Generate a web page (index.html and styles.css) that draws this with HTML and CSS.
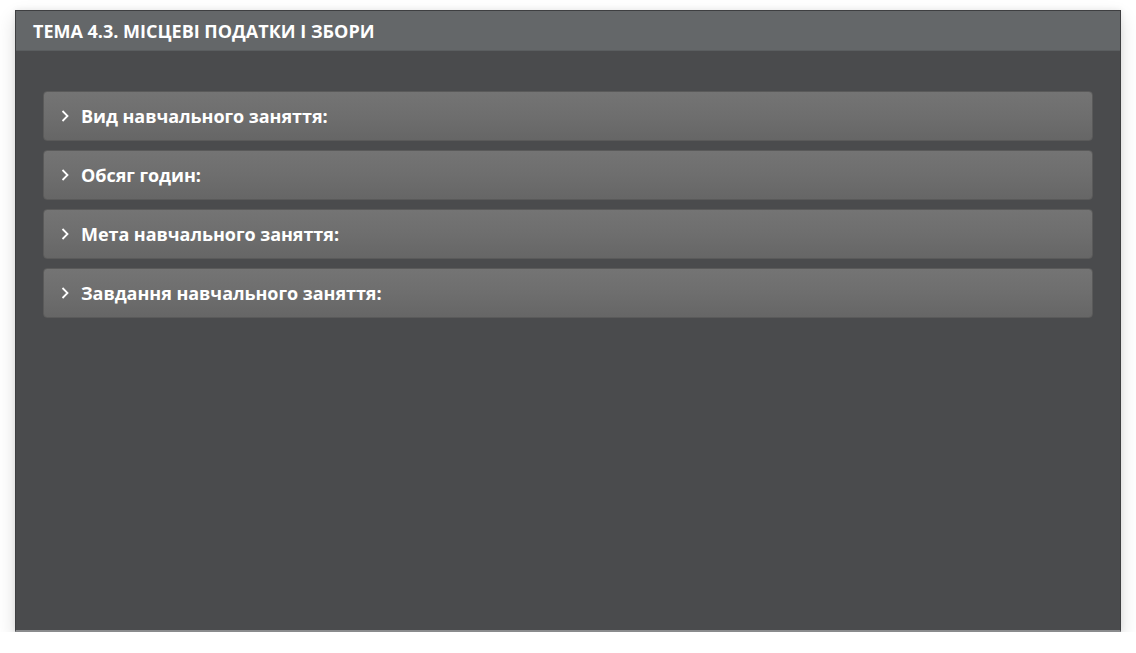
FILE: index.html
```html
<!DOCTYPE html>
<html lang="uk">
<head>
<meta charset="utf-8">
<title>Тема 4.3</title>
<link rel="stylesheet" href="styles.css">
</head>
<body>
<div class="panel">
  <div class="panel-header">ТЕМА 4.3. МІСЦЕВІ ПОДАТКИ І ЗБОРИ</div>
  <div class="panel-body">
    <div class="acc-item"><span class="chev"><svg width="10" height="14" viewBox="0 0 10 14"><path d="M2.5 2 L7.5 7 L2.5 12" fill="none" stroke="#fff" stroke-width="1.8"/></svg></span><span class="acc-title">Вид навчального заняття:</span></div>
    <div class="acc-item"><span class="chev"><svg width="10" height="14" viewBox="0 0 10 14"><path d="M2.5 2 L7.5 7 L2.5 12" fill="none" stroke="#fff" stroke-width="1.8"/></svg></span><span class="acc-title">Обсяг годин:</span></div>
    <div class="acc-item"><span class="chev"><svg width="10" height="14" viewBox="0 0 10 14"><path d="M2.5 2 L7.5 7 L2.5 12" fill="none" stroke="#fff" stroke-width="1.8"/></svg></span><span class="acc-title">Мета навчального заняття:</span></div>
    <div class="acc-item"><span class="chev"><svg width="10" height="14" viewBox="0 0 10 14"><path d="M2.5 2 L7.5 7 L2.5 12" fill="none" stroke="#fff" stroke-width="1.8"/></svg></span><span class="acc-title">Завдання навчального заняття:</span></div>
  </div>
</div>
</body>
</html>
```
FILE: styles.css
```css
html, body {
  margin: 0;
  padding: 0;
  background: #ffffff;
}
body {
  padding: 10px 15px 0 15px;
  font-family: "Open Sans", "Noto Sans", sans-serif;
}
.panel {
  width: 1106px;
  height: 622px;
  box-sizing: border-box;
  background: #4a4b4d;
  border: 1px solid #3e3f41;
  border-bottom: 2px solid #8a8b8d;
  box-shadow: 0 8px 18px rgba(0,0,0,0.14), 0 0 6px rgba(0,0,0,0.08);
  display: flex;
  flex-direction: column;
}
.panel-header {
  height: 40px;
  box-sizing: border-box;
  background: #646769;
  color: #ffffff;
  font-weight: 700;
  font-size: 18px;
  letter-spacing: 0;
  display: flex;
  align-items: center;
  padding-left: 17px;
  padding-top: 1px;
  border-bottom: 1px solid #5b5e60;
}
.panel-body {
  padding: 40px 27px 0 27px;
  display: flex;
  flex-direction: column;
  gap: 9px;
}
.acc-item {
  height: 50px;
  box-sizing: border-box;
  border: 1px solid #5a5a5a;
  border-radius: 4px;
  background: linear-gradient(to bottom, #747474 0%, #6e6e6e 50%, #666666 100%);
  display: flex;
  align-items: center;
  padding-left: 16px;
  color: #ffffff;
}
.chev {
  display: flex;
  width: 10px;
  margin-right: 11px;
}
.acc-title {
  font-weight: 700;
  font-size: 18px;
  letter-spacing: -0.05px;
}
```
